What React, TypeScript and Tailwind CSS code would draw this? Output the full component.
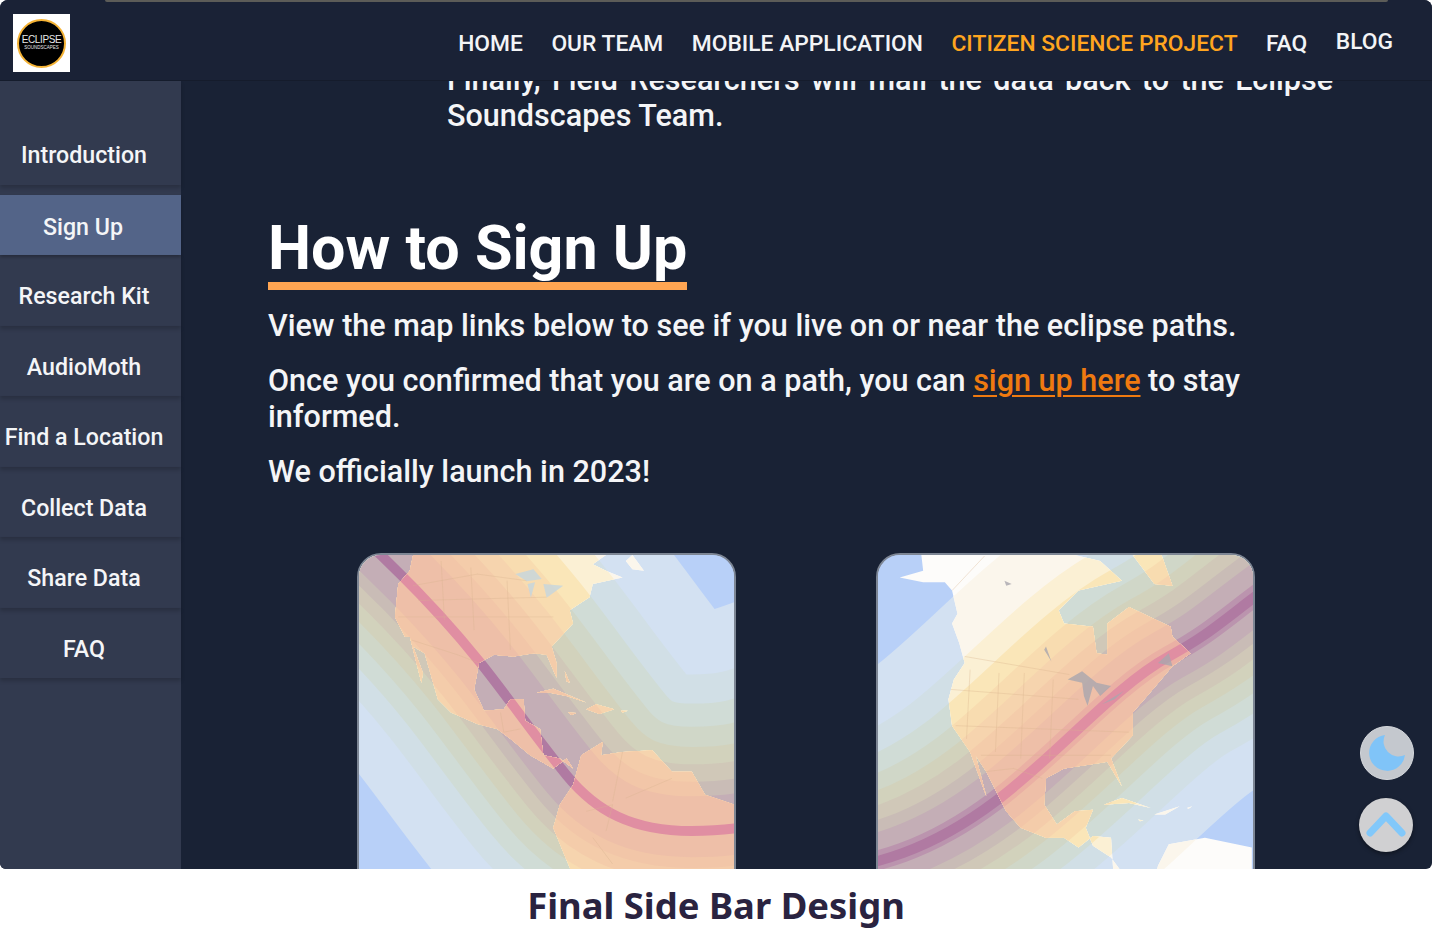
const sans = "font-['Roboto',sans-serif]";

const navLinks = ["HOME", "OUR TEAM", "MOBILE APPLICATION", "CITIZEN SCIENCE PROJECT", "FAQ", "BLOG"];
const sideLinks = ["Research Kit", "AudioMoth", "Find a Location", "Collect Data", "Share Data", "FAQ"];

const oceanBands = ["#d3e1f2", "#d1dfe6", "#d0dcd6", "#d0d7c8", "#d2d2bc", "#d0c8b8", "#c9bcb6", "#c4aeb6", "#bb94ae"];
const landBands = ["#fbf6ec", "#fbf0d4", "#fae6b8", "#f8dcb0", "#f6d4ae", "#f4ccaa", "#f2c6a8", "#eebfa8", "#eab0a4"];
const distances = [755, 540, 440, 360, 290, 230, 170, 120, 45];

type MapProps = {
  id: string;
  viewBox: string;
  path: string;
  upperClip: string;
  lowerClip: string;
  upperScale: number;
  lowerScale: number;
  bandCount: number;
  land: string;
  lakes: string;
  lakeFill: string;
  borders: string;
};

function Bands({ path, colors, scale }: { path: string; colors: string[]; scale: number }) {
  return (
    <>
      {colors.map((c, i) => (
        <path key={c} d={path} fill="none" stroke={c} strokeWidth={distances[i] * 2 * scale} strokeLinejoin="round" />
      ))}
    </>
  );
}

function EclipseMap(p: MapProps) {
  const [x, y, w, h] = p.viewBox.split(" ").map(Number);
  const ocean = oceanBands.slice(0, p.bandCount);
  const land = landBands.slice(0, p.bandCount);
  return (
    <div className="h-[340px] w-[379px] shrink-0 overflow-hidden rounded-[24px] border-2 border-[#7d8694] bg-[#b8d0f8]">
      <svg viewBox={p.viewBox} preserveAspectRatio="none" className="block h-full w-full">
        <defs>
          <clipPath id={`${p.id}-up`}><path d={p.upperClip} /></clipPath>
          <clipPath id={`${p.id}-low`}><path d={p.lowerClip} /></clipPath>
          <clipPath id={`${p.id}-land`}><path d={p.land} /></clipPath>
        </defs>
        <rect x={x} y={y} width={w} height={h + 100} fill="#b8d0f8" />
        <g clipPath={`url(#${p.id}-up)`}><Bands path={p.path} colors={ocean} scale={p.upperScale} /></g>
        <g clipPath={`url(#${p.id}-low)`}><Bands path={p.path} colors={ocean} scale={p.lowerScale} /></g>
        <path d={p.path} fill="none" stroke="#b07aa2" strokeWidth="30" />
        <g clipPath={`url(#${p.id}-land)`}>
          <rect x={x} y={y} width={w} height={h + 100} fill="#fdfcfa" />
          <g clipPath={`url(#${p.id}-up)`}><Bands path={p.path} colors={land} scale={p.upperScale} /></g>
          <g clipPath={`url(#${p.id}-low)`}><Bands path={p.path} colors={land} scale={p.lowerScale} /></g>
          <path d={p.path} fill="none" stroke="#e08ea2" strokeWidth="30" />
          <path d={p.borders} fill="none" stroke="#d9b48f" strokeWidth="2" opacity="0.5" />
        </g>
        <path d={p.lakes} fill={p.lakeFill} opacity="0.8" />
      </svg>
    </div>
  );
}

function Logo() {
  return (
    <div className="flex h-[58px] w-[57px] items-center justify-center bg-white">
      <div className="flex h-[49px] w-[49px] flex-col items-center justify-center rounded-full border-2 border-[#f5b335] bg-black text-[#e8e8e8]">
        <span className="font-['Liberation_Sans',sans-serif] text-[10px] leading-[10px] tracking-[-0.4px]">ECLIPSE</span>
        <span className="font-['Liberation_Sans',sans-serif] text-[4.5px] leading-[6px]">SOUNDSCAPES</span>
      </div>
    </div>
  );
}

export default function App() {
  return (
    <div className={`flex h-[939px] w-[1432px] flex-col overflow-hidden bg-white ${sans}`}>
      {/* Screenshot frame */}
      <div className="relative flex h-[869px] flex-col overflow-hidden rounded-b-[6px] rounded-t-[8px] bg-[#192235]">
        <div className="absolute left-[105px] top-0 z-20 h-[2px] w-[1283px] rounded-b bg-[#5c5c58]" />

        {/* Top nav */}
        <header className="z-10 flex h-[81px] shrink-0 justify-between border-b border-[#151c2c] bg-[#1a2236] pl-[13px] pr-[39px] pt-[14px]">
          <Logo />
          <nav className="flex gap-[28.5px] pt-[16px] text-[22.8px] font-medium leading-[28px] text-[#f3f4f6]">
            {navLinks.map((l) => (
              <a key={l} className={l.startsWith("CITIZEN") ? "text-[#ffa51f]" : l === "BLOG" ? "-mt-[2px]" : ""}>{l}</a>
            ))}
          </nav>
        </header>

        <div className="flex min-h-0 flex-1">
          {/* Sidebar */}
          <aside className="w-[181px] shrink-0 bg-[#323a4f] text-[23.2px] font-medium text-[#f4f5f7]">
            <div className="flex h-[104px] items-center justify-center pr-[13px] pt-[44px] shadow-[0_3px_4px_rgba(0,0,0,0.18)]">Introduction</div>
            <div className="mt-[10px] flex h-[60px] items-center justify-center bg-[#536488] pr-[15px] pt-[4px] shadow-[0_2px_3px_rgba(0,0,0,0.25)]">Sign Up</div>
            {sideLinks.map((l) => (
              <div key={l} className="flex h-[70.5px] items-center justify-center pr-[13px] pt-[13px] shadow-[0_3px_4px_rgba(0,0,0,0.18)]">{l}</div>
            ))}
          </aside>

          {/* Main content */}
          <main className="min-w-0 flex-1 overflow-hidden text-[30.55px] font-medium leading-[36px] text-[#f4f5f7]">
            <p className="-mt-[19px] ml-[266px] w-[886px] [text-align:justify]">
              Finally, Field Researchers will mail the data back to the Eclipse Soundscapes Team.
            </p>
            <div className="ml-[87px] mt-[81px] w-[985px]">
              <h2 className="inline-block border-b-[8px] border-[#ffa552] text-[61px] font-bold leading-[67px] text-white">How to Sign Up</h2>
              <p className="mt-[18px]">View the map links below to see if you live on or near the eclipse paths.</p>
              <p className="mt-[19px]">
                Once you confirmed that you are on a path, you can{" "}
                <a className="text-[#ef7a10] underline decoration-2 underline-offset-[4px]">sign up here</a> to stay informed.
              </p>
              <p className="mt-[19px]">We officially launch in 2023!</p>
            </div>
            <div className="ml-[176px] mt-[63px] flex gap-[140px]">
              <EclipseMap
                id="west"
                viewBox="51 42 1137 1020"
                path="M-50 -120 L120 45 C230 150 340 270 420 370 S590 600 680 710 S880 880 1060 880 S1300 850 1500 780"
                upperClip="M-50 -120 L120 45 C230 150 340 270 420 370 S590 600 680 710 S880 880 1060 880 S1300 850 1500 780 L2000 780 L2000 -300 L-50 -300 Z"
                lowerClip="M-50 -120 L120 45 C230 150 340 270 420 370 S590 600 680 710 S880 880 1060 880 S1300 850 1500 780 L2000 780 L2000 1500 L-500 1500 L-500 -120 Z"
                upperScale={0.88}
                lowerScale={0.66}
                bandCount={8}
                lakeFill="#c4d6de"
                land="M215 42 L205 90 L170 130 L160 230 L190 290 L205 290 L240 430 L245 400 L215 320 L250 340 L290 480 L330 520 L410 555 L470 570 L510 600 L570 650 L640 690 L680 660 L700 690 L660 660 L610 650 L600 570 L555 545 L550 480 L510 480 L490 510 L430 515 L400 450 L415 370 L460 345 L520 350 L580 340 L620 345 L650 415 L650 370 L635 320 L700 250 L690 210 L750 170 L760 130 L850 110 L800 90 L760 70 L800 42 Z M860 60 L880 42 L915 90 L880 85 Z M700 740 L725 650 L790 610 L785 650 L850 640 L940 635 L1000 700 L1060 700 L1100 770 L1190 800 L1190 1065 L720 1065 L640 870 L660 800 Z M590 460 L640 448 L740 490 L680 470 L630 460 Z M740 510 L770 495 L825 510 L780 525 Z M685 520 L710 522 L695 528 Z M845 515 L866 515 L850 520 Z M675 395 L690 430 L680 425 Z"
                lakes="M525 100 L580 85 L605 115 L560 122 Z M562 130 L572 172 L585 125 Z M610 130 L670 135 L620 172 Z"
                borders="M215 135 L410 100 L560 120 M300 60 L310 240 M390 80 L400 270 M500 120 L510 330 M170 230 L640 230 M210 300 L350 345 L415 370 M230 180 L620 170 M480 520 L490 580 L540 570 M820 790 L850 640 M740 820 L820 800 L800 880 M860 780 L1000 720 M760 900 L820 980"
              />
              <EclipseMap
                id="east"
                viewBox="45 42 1038 1020"
                path="M-200 1020 C50 990 200 930 370 790 S700 440 850 350 S1000 230 1300 0"
                upperClip="M-200 1020 C50 990 200 930 370 790 S700 440 850 350 S1000 230 1300 0 L1300 -500 L-500 -500 L-500 1020 Z"
                lowerClip="M-200 1020 C50 990 200 930 370 790 S700 440 850 350 S1000 230 1300 0 L2000 0 L2000 1500 L-200 1500 Z"
                upperScale={0.7}
                lowerScale={0.62}
                bandCount={9}
                lakeFill="#a9a6ae"
                land="M165 42 L170 90 L105 110 L170 125 L230 125 L250 150 L265 220 L250 250 L270 310 L285 370 L255 420 L240 480 L250 560 L300 640 L345 775 L315 650 L345 700 L400 820 L440 870 L510 900 L560 900 L600 930 L640 895 L690 900 L700 1065 L760 1065 L690 960 L640 925 L620 870 L640 815 L590 820 L540 860 L505 800 L510 720 L560 690 L680 670 L720 745 L690 660 L750 590 L750 520 L790 470 L860 380 L910 340 L860 290 L855 260 L740 200 L680 250 L680 345 L650 340 L640 260 L560 250 L545 210 L600 150 L720 120 L660 60 L590 42 Z M750 42 L830 42 L860 135 L810 130 Z M820 985 L850 920 L950 900 L1080 930 L1080 1065 L800 1065 Z M670 800 L720 780 L800 810 L740 795 Z M810 830 L880 805 L840 830 Z M900 810 L915 805 L905 812 Z M765 845 L780 848 L770 850 Z"
                lakes="M570 420 L610 395 L650 430 L690 440 L660 470 L640 440 L625 500 L615 470 L610 430 Z M665 495 L725 455 L700 480 Z M820 370 L850 340 L860 380 Z M395 120 L415 130 L400 135 Z M510 320 L525 365 L505 330 Z"
                borders="M285 350 L575 405 M245 450 L600 480 M300 390 L290 600 M380 400 L370 640 M450 400 L440 660 M530 420 L520 660 M260 560 L740 580 M330 650 L690 650 M340 700 L420 690 L500 720 M250 150 L340 45"
              />
            </div>
          </main>
        </div>

        {/* Floating buttons */}
        <button className="absolute left-[1360px] top-[726px] flex h-[54px] w-[54px] items-center justify-center rounded-full border border-[#d5d8dc] bg-[#c4c8ce]">
          <svg viewBox="0 0 40 40" className="h-[40px] w-[40px]">
            <path d="M18 2 A18 18 0 1 0 38 22 A15 15 0 0 1 18 2 Z" fill="#80c4f8" />
          </svg>
        </button>
        <button className="absolute left-[1359px] top-[798px] flex h-[54px] w-[54px] items-center justify-center rounded-full bg-[#d0d0d2] shadow-[0_2px_4px_rgba(0,0,0,0.4)]">
          <svg viewBox="0 0 40 30" className="h-[30px] w-[40px]">
            <path d="M4 23 L20 6 L36 23" fill="none" stroke="#82c8fa" strokeWidth="7" strokeLinecap="round" strokeLinejoin="round" />
          </svg>
        </button>
      </div>

      <p className="flex-1 pt-[11px] text-center font-['Noto_Sans',sans-serif] text-[36.4px] font-bold leading-[50px] text-[#2a2340]">Final Side Bar Design</p>
    </div>
  );
}
